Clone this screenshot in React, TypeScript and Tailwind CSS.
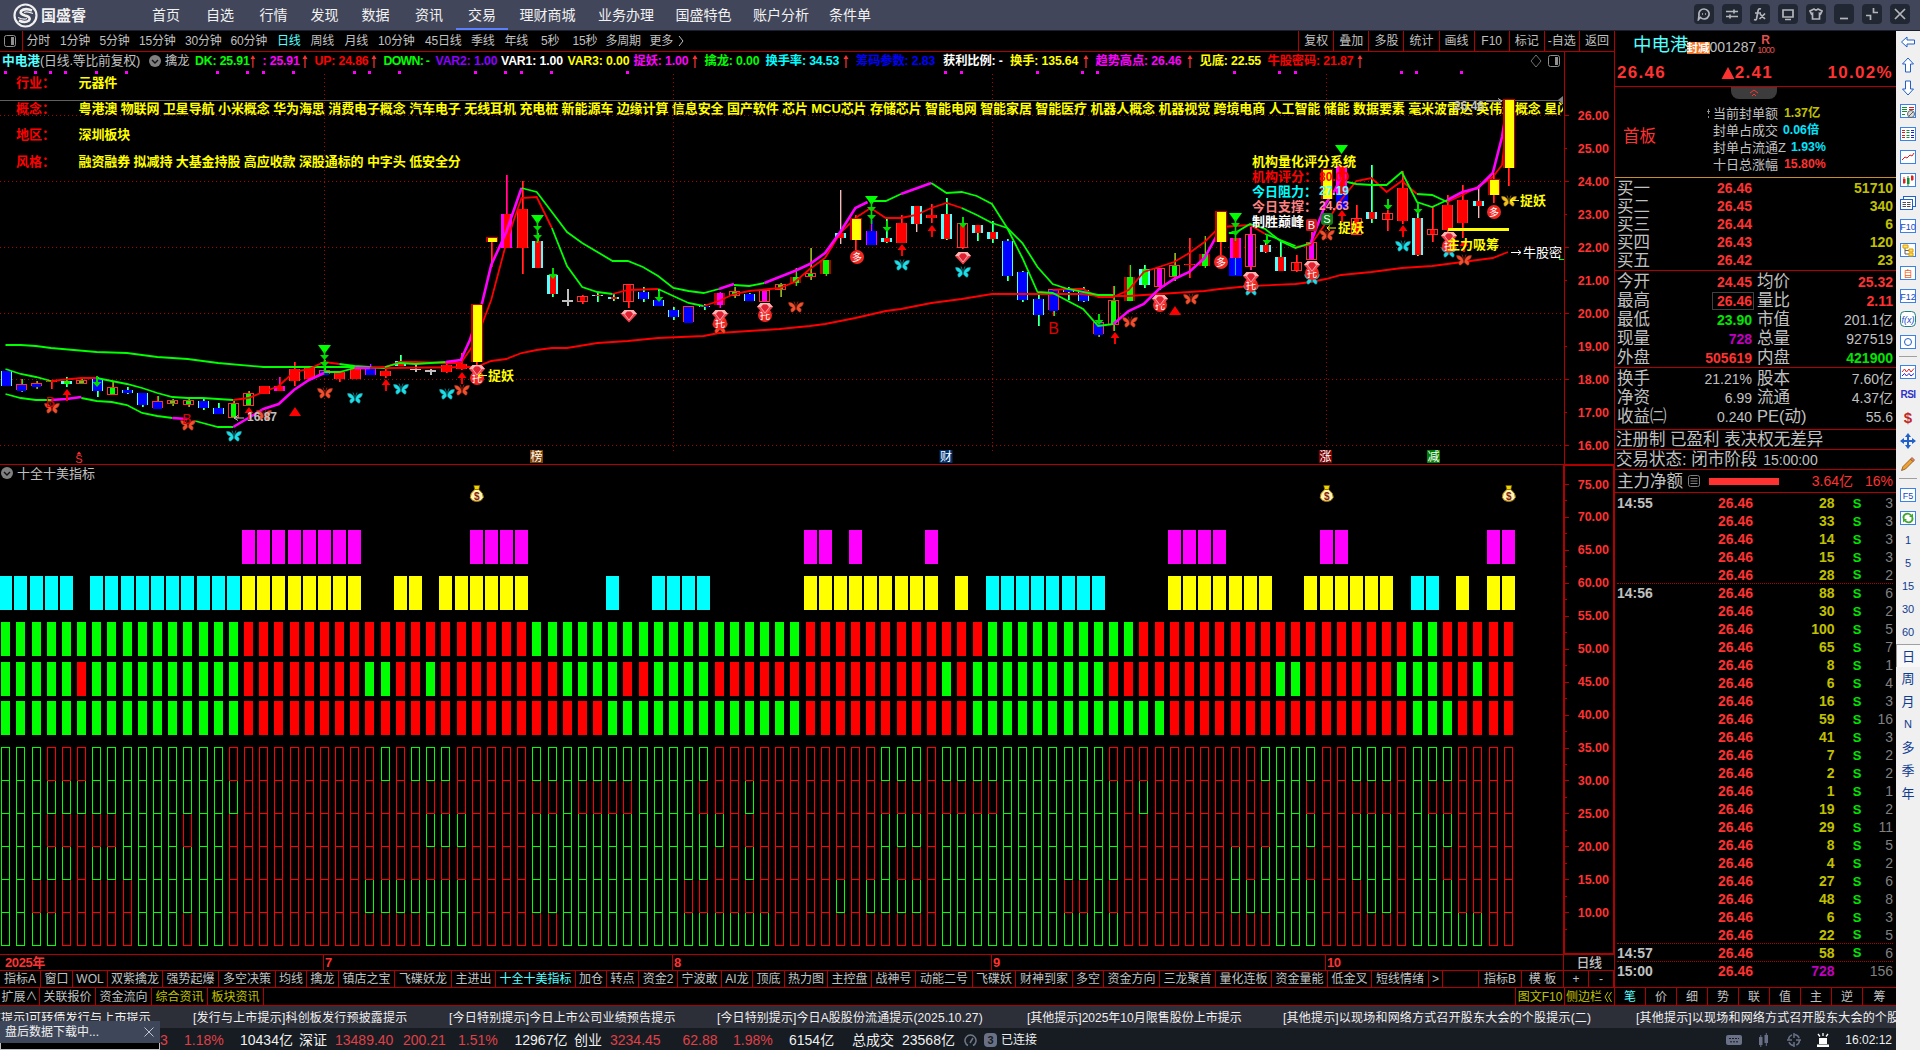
import React from 'react';

const STEP = 15.177;
const cx = (i: number) => 5.5 + i * STEP;

const MENU = [
    ['首页', 'w-[54px]'], ['自选', 'w-[54px]'], ['行情', 'w-[53px]'], ['发现', 'w-[49px]'],
    ['数据', 'w-[53px]'], ['资讯', 'w-[54px]'], ['交易', 'w-[52px]'], ['理财商城', 'w-[79px]'],
    ['业务办理', 'w-[78px]'], ['国盛特色', 'w-[77px]'], ['账户分析', 'w-[78px]'], ['条件单', 'w-[60px]'],
];

const PERIODS = [
    ['分时', 'w-[33.5px]'], ['1分钟', 'w-[39.5px]'], ['5分钟', 'w-[39.5px]'], ['15分钟', 'w-[46px]'],
    ['30分钟', 'w-[45.5px]'], ['60分钟', 'w-[46.5px]'], ['日线', 'w-[33.5px]'], ['周线', 'w-[34px]'],
    ['月线', 'w-[33.5px]'], ['10分钟', 'w-[47px]'], ['45日线', 'w-[46px]'], ['季线', 'w-[33.5px]'],
    ['年线', 'w-[36.5px]'], ['5秒', 'w-[31.5px]'], ['15秒', 'w-[33px]'], ['多周期', 'w-[44px]'], ['更多', 'w-[28px]'],
];

const TOOLS = ['复权', '叠加', '多股', '统计', '画线', 'F10', '标记', '-自选', '返回'];

// label, colour, width, rising arrow
const INDICATORS: [string, string, string, boolean][] = [
    ['擒龙', 'text-[#c0c0c0]', 'w-[30px]', false],
    ['DK: 25.91', 'text-[#00ff00]', 'w-[67.5px]', true],
    [': 25.91', 'text-[#ff00ff]', 'w-[52px]', true],
    ['UP: 24.86', 'text-[#ff0000]', 'w-[69px]', true],
    ['DOWN: -', 'text-[#00ff00]', 'w-[52px]', false],
    ['VAR2: 1.00', 'text-[#8c00ff]', 'w-[65.5px]', false],
    ['VAR1: 1.00', 'text-white', 'w-[66.5px]', false],
    ['VAR3: 0.00', 'text-[#ffff00]', 'w-[66px]', false],
    ['捉妖: 1.00', 'text-[#ff00ff]', 'w-[71px]', true],
    ['擒龙: 0.00', 'text-[#00ff00]', 'w-[61px]', false],
    ['换手率: 34.53', 'text-[#00ffff]', 'w-[90.5px]', true],
    ['筹码参数: 2.83', 'text-[#0000ff]', 'w-[87px]', false],
    ['获利比例: -', 'text-white', 'w-[67px]', false],
    ['换手: 135.64', 'text-[#ffff00]', 'w-[85.5px]', true],
    ['趋势高点: 26.46', 'text-[#ff00ff]', 'w-[104px]', true],
    ['见底: 22.55', 'text-[#ffff00]', 'w-[68px]', false],
    ['牛股密码: 21.87', 'text-[#ff0000]', 'w-[102px]', true],
];

const TABS = [
    ['指标A', 'w-[41px]'], ['窗口', 'w-[32px]'], ['WOL', 'w-[35px]'], ['双紫擒龙', 'w-[55px]'], ['强势起爆', 'w-[56px]'],
    ['多空决策', 'w-[57px]'], ['均线', 'w-[31px]'], ['擒龙', 'w-[32px]'], ['镇店之宝', 'w-[56px]'], ['飞碟妖龙', 'w-[57px]'],
    ['主进出', 'w-[44px]'], ['十全十美指标', 'w-[80px]'], ['加仓', 'w-[31px]'], ['转点', 'w-[32px]'], ['资金2', 'w-[39px]'],
    ['宁波敢', 'w-[44px]'], ['AI龙', 'w-[31px]'], ['顶底', 'w-[32px]'], ['热力图', 'w-[43px]'], ['主控盘', 'w-[44px]'],
    ['战神号', 'w-[44px]'], ['动能二号', 'w-[57px]'], ['飞碟妖', 'w-[43px]'], ['财神到家', 'w-[57px]'], ['多空', 'w-[31px]'],
    ['资金方向', 'w-[56px]'], ['三龙聚首', 'w-[56px]'], ['量化连板', 'w-[56px]'], ['资金量能', 'w-[56px]'], ['低金叉', 'w-[44px]'],
    ['短线情绪', 'w-[57px]'], ['>', 'w-[14px]'], ['', 'w-[36px]'], ['指标B', 'w-[43px]'], ['模 板', 'w-[42px]'],
    ['+', 'w-[25px]'], ['-', 'w-[25px]'],
];

const CONCEPTS = '粤港澳 物联网 卫星导航 小米概念 华为海思 消费电子概念 汽车电子 无线耳机 充电桩 新能源车 边缘计算 信息安全 国产软件 芯片 MCU芯片 存储芯片 智能电网 智能家居 智能医疗 机器人概念 机器视觉 跨境电商 人工智能 储能 数据要素 毫米波雷达 英伟达概念 星闪';

// [wickTop, wickBottom, bodyTop, bodyBottom, kind]
const CANDLES: [number, number, number, number, string][] = [
    [371, 386, 371, 386, 'cb'], [379, 392, 384, 390, 'rb'], [381, 389, 383, 386, 'rb'], [381, 389, 381, 382, 'rr'],
    [377, 387, 381, 384, 'cg'], [379, 384, 380, 383, 'rg'], [377, 397, 379, 391, 'cb'], [382, 394, 387, 394, 'rg'],
    [387, 394, 390, 393, 'cb'], [393, 407, 393, 405, 'cb'], [396, 409, 401, 408, 'rb'], [399, 406, 400, 403, 'rg'],
    [398, 407, 400, 404, 'rg'], [399, 410, 401, 408, 'cb'], [403, 414, 408, 414, 'cb'], [401, 418, 403, 417, 'rg'],
    [391, 406, 393, 405, 'rg'], [386, 394, 386, 394, 'rr'], [377, 391, 386, 391, 'mr'], [362, 386, 369, 381, 'rr'],
    [368, 379, 368, 379, 'rr'], [360, 374, 370, 374, 'rb'], [371, 382, 372, 379, 'rr'], [368, 379, 368, 379, 'rr'],
    [364, 375, 368, 375, 'mb'], [369, 378, 371, 376, 'rr'], [355, 366, 361, 366, 'cr'], [362, 372, 369, 370, 'ww'],
    [369, 375, 370, 372, 'ww'], [363, 373, 365, 372, 'rr'], [353, 370, 364, 369, 'rr'], [304, 367, 304, 362, 'yy'],
    [237, 267, 237, 242, 'yy'], [175, 248, 214, 248, 'mr'], [181, 274, 209, 248, 'rr'], [233, 268, 241, 268, 'cr'],
    [273, 297, 275, 294, 'cr'], [289, 306, 300, 302, 'ww'], [295, 304, 296, 301, 'hr'], [293, 302, 295, 296, 'cr'],
    [293, 301, 297, 299, 'cr'], [284, 308, 284, 301, 'hr'], [287, 302, 292, 299, 'cb'], [290, 306, 300, 306, 'cb'],
    [307, 320, 310, 317, 'cb'], [306, 322, 306, 322, 'rb'], [304, 310, 306, 307, 'cb'], [292, 308, 293, 305, 'dm'],
    [287, 298, 291, 295, 'rg'], [293, 301, 294, 301, 'cb'], [290, 301, 290, 301, 'rm'], [283, 297, 284, 289, 'rg'],
    [268, 286, 277, 283, 'dg'], [248, 280, 273, 276, 'rg'], [260, 276, 260, 274, 'dg'], [190, 244, 233, 238, 'cs'],
    [215, 250, 218, 240, 'yy'], [220, 245, 231, 245, 'mb'], [219, 243, 238, 242, 'cr'], [215, 243, 223, 243, 'rr'],
    [206, 232, 206, 224, 'cs'], [204, 223, 215, 218, 'rr'], [198, 240, 214, 239, 'cr'], [223, 249, 223, 247, 'hr'],
    [225, 241, 225, 233, 'cr'], [221, 243, 232, 239, 'cr'], [239, 281, 241, 276, 'cb'], [271, 302, 272, 300, 'cb'],
    [292, 326, 299, 315, 'cb'], [289, 316, 289, 310, 'rb'], [287, 300, 289, 292, 'cb'], [287, 302, 290, 301, 'cb'],
    [321, 337, 322, 334, 'rb'], [286, 331, 300, 324, 'rg'], [265, 301, 277, 301, 'dg'], [265, 288, 269, 285, 'cg'],
    [268, 290, 268, 286, 'rm'], [253, 281, 265, 276, 'rg'], [238, 278, 264, 265, 'rr'], [236, 268, 254, 266, 'dg'],
    [211, 255, 211, 242, 'yy'], [238, 276, 238, 258, 'mr'], [227, 270, 234, 266, 'rm'], [242, 253, 245, 252, 'cs'],
    [242, 271, 257, 271, 'cr'], [255, 272, 262, 270, 'hr'], [232, 260, 242, 259, 'rm'], [169, 199, 169, 199, 'yy'],
    [166, 209, 166, 194, 'mr'], [205, 235, 218, 234, 'hr'], [165, 223, 212, 219, 'cr'], [210, 231, 213, 219, 'hr'],
    [171, 224, 188, 221, 'rr'], [208, 256, 218, 255, 'cr'], [207, 242, 229, 234, 'hr'], [195, 232, 205, 230, 'rr'],
    [185, 238, 200, 223, 'rr'], [185, 218, 201, 206, 'cs'], [173, 203, 179, 195, 'yy'], [99, 186, 99, 168, 'yy'],
];

const HUE: Record<string, string> = {
    c: '#54ffff', r: '#ff3232', m: '#ff00ff', d: '#b00000', y: '#ffff00', w: '#c0c0c0', b: '#0000ff', g: '#00ff00', h: '#ff3232', s: '#ff0000',
};

const LINES: [string, string][] = [
    ['g', '0,345 1,345 2,346 3,348 6,352 8,353 10,357 12,359 14,363 17,367 23,367 25,368'],
    ['r', '25,368 31,367 32,361 33,359 34,353 35,350 36,348 37,348 39,343 41,341 43,338 46,336 47,333 50,330 51,329 53,326 54,324 56,318 58,311 59,309 61,303 63,299 65,294 71,294 72,296 74,296 76,294 77,293 79,291 80,289 82,286 85,284 86,282 87,279 88,275 90,272 92,268 94,266 96,262 98,258 99,252'],
    ['g', '0,369 1,374 2,377 3,381'],
    ['r', '3,381 5,378 6,378'],
    ['g', '6,378 7,381 8,384 9,388 10,393 11,397 12,398 13,398 14,399 15,400'],
    ['r', '15,400 16,398 17,392 18,386 19,372 20,369 21,362 22,364'],
    ['g', '22,364 23,366 24,367'],
    ['r', '24,368 25,367 26,362 27,362 29,363 30,363 30.6,350 31,340 32,300 33,243 33.5,220 34,198 35,197 36,228'],
    ['g', '36,228 37,266 38,287 39,292 40,294'],
    ['r', '40,294 41,290 43,289'],
    ['g', '43,289 44,296 45,303 46,306'],
    ['r', '46,306 47,301 48,294 49,291 51,288 52,282 53,269 54,258 55,233 56,218 57,208 58,218 59,218 60,215 61,208 62,203 63,208'],
    ['g', '63,208 64,215 65,223 66,228 67,258 68,292 69,293 70,301 71,309 72,326 73,324'],
    ['r', '69,290 70,289 71,289 72,297 73,297 74,290 75,272 77,262 78,253 79,242 80,227 82,225 83,234'],
    ['g', '83,234 85,246'],
    ['r', '85,247 86,245 87,223 88,200 89,181 90,178 91,192 92,181 93,194'],
    ['g', '93,194 94,195 95,202'],
    ['r', '95,202 96,195 97,187 98,177 98.6,165 99,110'],
    ['g', '0,394 1,398 2,400 3,400'],
    ['m', '3,400 4,399 5,397'],
    ['g', '5,398 6,401 7,402 8,405 9,413 10,416 11,418'],
    ['m', '11,418 12,419'],
    ['g', '12.5,421 14,427 15,427'],
    ['m', '15,427 16,418 17,409 18,404 19,390 20,380 21,373'],
    ['g', '21,372 22,372 23,368'],
    ['m', '23,368 24,368'],
    ['g', '25,367 26,363 27,364 29,362'],
    ['m', '29,362 30,360 30.6,340 31.4,303 32,265 33,232 34,188'],
    ['g', '34,188 35,192 36,212 37,232 38,243 40,261 41,261 42,267 43,276 44,288 45,291 46,293 47,289'],
    ['m', '47,289 48,284'],
    ['g', '48,285 49,286 50,283'],
    ['m', '50,283 51,277 52,271 53,264 54,253 55,232 56,208 56.8,202'],
    ['g', '57,201 58,201 59,194'],
    ['m', '59,194 61,183'],
    ['g', '61,183 62,193 63,192 64,196 65,204 66,228 67,243 68,267 69,284 70,289 72,295 73,295'],
    ['m', '73,324 74,311 75,304 76,289 77,279 78,272 79,258 79.9,233'],
    ['g', '80.6,233 81,233 82,224 83,229 84,241 85,248 86,243'],
    ['m', '86,243 87,203 87.6,190 88,177'],
    ['g', '88.4,182 89,184 90,185 91,185 92,172 93,202 94,207 95,200'],
    ['m', '95,200 96,192 97,188 98,173 98.6,137 99,100'],
];

const DOTS = [0, 2, 3, 4, 6, 8, 14, 16, 17, 19, 23, 24, 26, 31, 33, 34, 36, 41, 62, 63, 68, 71, 72, 81, 84, 85, 92, 93, 96];
const MONTHS = [324.5, 673.5, 992.5, 1326.5];
const PRICES = [26, 25, 24, 23, 22, 21, 20, 19, 18, 17, 16];

const RED_FLIES = [[52, 408], [188, 425], [264, 415], [325, 393], [462, 390], [720, 328], [796, 307], [1130, 322], [1191, 299], [1327, 235], [1464, 260]];
const CYAN_FLIES = [[234, 436], [355, 398], [401, 389], [447, 394], [902, 265], [963, 272], [1251, 290], [1312, 279], [1403, 246], [1449, 252]];
const BALLS: [number, number, string][] = [
    [477, 378, '托'], [720, 323, '托'], [765, 315, '托'], [1160, 305, '托'], [1251, 285, '托'], [1312, 273, '托'], [1449, 246, '托'],
    [857, 257, '多'], [1221, 262, '多'], [1494, 212, '多'],
];
const GEMS = [[477, 371], [629, 316], [720, 316], [765, 309], [963, 258], [1160, 301], [1251, 278], [1312, 267], [1449, 238]];
const UPS = [[67, 389], [249, 407], [386, 379], [462, 372], [902, 244], [932, 225], [1115, 332], [1342, 210], [1403, 225], [1464, 240]];
const DOWNS = [[97, 385], [553, 277], [659, 300], [887, 230], [963, 226], [1099, 323], [1267, 243], [1388, 208], [1418, 212]];
const TRIPLES = [[324.5, 345, 357, 364], [537.5, 215, 228, 237], [871.5, 196, 209, 217], [1235.5, 213, 225, 233]];

// run-length colour rows of the lower panel
const unroll = (s: string) => s.split(' ').map((t) => t[0].repeat(Number(t.slice(1)))).join('');
const BLOCKS: [number, number, string][] = [
    [530, 13, 'x16 m8 x7 m4 x18 m2 x1 m1 x4 m1 x15 m4 x6 m2 x9 m2'],
    [576, 13, 'a5 x1 a10 y8 x2 y2 x1 y6 x5 a1 x2 a4 x6 y9 x1 y1 x1 a8 x4 y7 x2 y6 x1 a2 x1 y1 x1 y2'],
    [622, 9, 'g16 e19 g18 e12 g10 e18 g2 e5'],
    [662, 9, 'g5 e1 g10 e8 g2 e2 g1 e8 g4 e2 g4 e15 g1 e1 g9 e11 g2 e6 g3 e2 g1 e2'],
    [701, 9, 'g16 e24 g13 e11 g13 e16 g3 e4'],
];
const FRAMES: [number, string][] = [
    [912, 'g4 e5 g3 e1 g2 e13 g3 e6 g14 e11 g12 e10 g3 e6 g5 e2'],
    [879, 'g2 e7 g6 e9 g7 e4 g10 e10 g1 e1 g4 e1 g8 e2 g1 e8 g6 e3 g2 e1 g3 e4'],
    [846, 'g5 e1 g9 e20 g12 e2 g1 e8 g1 e3 g12 e7 g1 e1 g3 e3 g3 e1 g2 e5'],
    [813, 'g3 e5 g4 e1 g2 e13 g3 e4 g13 e10 g3 e1 g12 e10 g3 e2 g3 e1 g3 e4'],
    [780, 'g16 e21 g1 e4 g4 e3 g1 e16 g8 e1 g1 e8 g2 e7 g1 e6'],
    [747, 'g3 e3 g9 e10 g1 e1 g3 e5 g12 e11 g3 e1 g11 e10 g4 e2 g3 e1 g3 e4'],
];
const BLOCK_HUE: Record<string, string> = { m: '#ff00ff', a: '#00ffff', y: '#ffff00', g: '#00ff00', e: '#ff0000' };

const TICKS = [
    ['14:55', '28', '3'], ['', '33', '3'], ['', '14', '3'], ['', '15', '3'], ['', '28', '2'],
    ['14:56', '88', '6'], ['', '30', '2'], ['', '100', '5'], ['', '65', '7'], ['', '8', '1'],
    ['', '6', '4'], ['', '16', '3'], ['', '59', '16'], ['', '41', '3'], ['', '7', '2'],
    ['', '2', '2'], ['', '1', '1'], ['', '19', '2'], ['', '29', '11'], ['', '8', '5'],
    ['', '4', '2'], ['', '27', '6'], ['', '48', '8'], ['', '6', '3'], ['', '22', '5'],
    ['14:57', '58', '6'], ['15:00', '728', '156'],
];

function Candle({ i, c }: { i: number; c: [number, number, number, number, string] }) {
    const [wt, wb, bt, bb, kind] = c;
    const x = Math.round(cx(i) - 5);
    const h = Math.max(bb - bt, 1);
    const edge = HUE[kind[0]];
    const fill = kind[1] === 'r' ? '#ff0000' : HUE[kind[1]];
    const wick = kind[0] === 'y' ? '#ff3232' : edge;
    const side = ['cb', 'rb', 'cr'].includes(kind) ? '#00ff00' : kind === 'yy' ? '#ff0000' : fill;
    return (
        <g>
            <rect x={x + 5} y={wt} width={1} height={wb - wt} fill={wick} />
            <rect x={x + 6} y={wt} width={1} height={wb - wt} fill={side} />
            {kind === 'yy' && <><rect x={x} y={bt} width={12} height={h} fill="#c00000" /><rect x={x + 1.5} y={bt + 1} width={9} height={h - 1} fill="#ffff00" /></>}
            {['cb', 'rb', 'mb', 'rr', 'ww'].includes(kind) && <><rect x={x} y={bt} width={11} height={h} fill={edge} /><rect x={x + 1} y={bt + (kind === 'rb' ? 1 : 0)} width={9} height={h} fill={fill} /></>}
            {['cr', 'cs', 'cg', 'mr', 'dg', 'dm'].includes(kind) && <><rect x={x} y={bt} width={11} height={h} fill={edge} /><rect x={x + 3} y={bt} width={6} height={h} fill={fill} /></>}
            {['rg', 'hr', 'rm'].includes(kind) && <><rect x={x + 0.5} y={bt + 0.5} width={10} height={h} fill="#000" stroke="#ff3232" /><rect x={x + 3} y={bt + 1} width={5} height={h - 1} fill={fill} /></>}
        </g>
    );
}

function Butterfly({ x, y, body, rim }: { x: number; y: number; body: string; rim: string }) {
    return (
        <g transform={`translate(${x} ${y})`} fill={body} stroke={rim} strokeWidth={0.5}>
            <path d="M-.4 1 L-1.5-2 Q-4.500-5.500-7.500-4.500 Q-7.500-1-3.500.5 Q-6 1.500-5 4.500 Q-3.500 7-.4 2Z" />
            <path d="M.4 1 L1.500-2 Q4.500-5.500 7.500-4.500 Q7.500-1 3.500.5 Q6 1.500 5 4.500 Q3.500 7 .4 2Z" />
            <path d="M-.5-1.500 L-2-5.500 M.5-1.500 L2-5.500 M0-1.500 V3" fill="none" strokeWidth={0.9} />
        </g>
    );
}

function Tag({ x, label, fill }: { x: number; label: string; fill: string }) {
    return (
        <g>
            <rect x={x - 6.5} y={450} width={13} height={13} fill={fill} />
            <text x={x} y={461} textAnchor="middle" fill="#fff" className="text-[12px]">{label}</text>
        </g>
    );
}

function PriceChart() {
    return (
        <svg width={1614} height={394} viewBox="0 70 1614 394" className="block overflow-visible">
            <g shapeRendering="crispEdges" stroke="#b00000" strokeWidth={1}>
                {[26, 24, 22, 20, 18, 16].map((p) => (
                    <line key={p} x1={0} x2={1564} y1={115.5 + (26 - p) * 33} y2={115.5 + (26 - p) * 33} strokeDasharray="1 3" />
                ))}
                {MONTHS.map((x) => <line key={x} x1={x} x2={x} y1={74} y2={451} strokeDasharray="1 3" />)}
                <line x1={1564.5} x2={1564.5} y1={52} y2={464} />
                {PRICES.map((p) => (
                    <line key={p} x1={1564} x2={p % 2 ? 1567 : 1569} y1={115.5 + (26 - p) * 33} y2={115.5 + (26 - p) * 33} />
                ))}
            </g>
            {PRICES.map((p) => (
                <text key={p} x={1609} y={119.8 + (26 - p) * 33} textAnchor="end" fill="#ff3232" className="text-[12.5px] font-bold">{p}.00</text>
            ))}
            {DOTS.map((i) => <rect key={i} x={Math.round(cx(i) - 2)} y={71} width={3} height={3} fill="#ff00ff" />)}
            <line x1={0} x2={1563} y1={100.5} y2={100.5} stroke="#606060" />
            <path d="M1563 96 V104 L1558 100Z" fill="#808080" />

            <g shapeRendering="crispEdges">
                {CANDLES.map((c, i) => <Candle key={i} i={i} c={c} />)}
                <rect x={1229} y={258} width={13} height={18} fill="#0000ff" />
                <rect x={1235} y={258} width={1} height={17} fill="#00c0ff" />
                <rect x={1336} y={194} width={12} height={15} fill="#0000ff" />
            </g>

            {LINES.map(([c, pts], k) => (
                <polyline
                    key={k}
                    points={pts.split(' ').map((p) => { const [i, y] = p.split(','); return `${cx(Number(i)).toFixed(1)},${y}`; }).join(' ')}
                    fill="none"
                    stroke={c === 'r' ? '#ff0000' : HUE[c]}
                    strokeWidth={c === 'm' ? 2.6 : 1.8}
                />
            ))}
            <g shapeRendering="crispEdges">
                {[31, 56, 80, 87, 98, 99].map((i) => <Candle key={i} i={i} c={CANDLES[i]} />)}
            </g>
            <rect x={1448} y={228} width={61} height={3} fill="#ffff00" />
            <rect x={1559} y={259} width={5} height={1} fill="#00ff00" />

            {CYAN_FLIES.map(([x, y], k) => <Butterfly key={k} x={x} y={y} body="#20dce6" rim="#0a8088" />)}
            {RED_FLIES.map(([x, y], k) => <Butterfly key={k} x={x} y={y} body="#f0502e" rim="#8c2414" />)}
            <Butterfly x={1509} y={201} body="#f0c020" rim="#806010" />
            {BALLS.map(([x, y, s], k) => (
                <g key={k}>
                    <circle cx={x} cy={y} r={7} fill="#f02824" />
                    <text x={x} y={y + 4} textAnchor="middle" fill="#fff" className="text-[10px]">{s}</text>
                </g>
            ))}
            {GEMS.map(([x, y], k) => (
                <g key={k} transform={`translate(${x} ${y})`}>
                    <path d="M-4.500-6 H4.500 L8-2 L0 6.500 L-8-2Z" fill="#f4434c" />
                    <path d="M-4.500-6 H4.500 L8-2 H-8Z" fill="#ffb4b4" />
                    <path d="M-4.500-2 L-2-5 H2 L4.500-2 L0 4Z" fill="#e02030" stroke="#ffd0d0" strokeWidth={0.7} />
                </g>
            ))}
            {UPS.map(([x, y], k) => <path key={k} d={`M${x} ${y} l4.500 6 h-3.500 v6 h-2 v-6 h-3.500Z`} fill="#ff0000" />)}
            {DOWNS.map(([x, y], k) => <path key={k} d={`M${x} ${y + 2} l4.500-5 h-3.500 v-6 h-2 v6 h-3.500Z`} fill="#00dc00" />)}
            <path d="M295 407 L301 416 H289Z M1175 306 L1181 315 H1169Z" fill="#ff0000" />
            {TRIPLES.map(([x, a, b, c]) => (
                <g key={x}>
                    <path d={`M${x - 6.5} ${a} h13 l-6.500 9Z`} fill="#00ff00" />
                    <path d={`M${x - 4.5} ${b - 2} h9 l-4.500 5Z M${x - 4.5} ${c - 2} h9 l-4.500 5Z M${x - 0.8} ${a + 6} h1.600 v22 h-1.600Z`} fill="#00dc00" />
                </g>
            ))}
            <path d="M1335 145 h13 l-6.500 9Z" fill="#00ff00" />

            <g className="text-[14px]" fill="#e00000" textAnchor="middle">
                <text x={50.5} y={407}>B</text>
                <text x={187} y={424}>B</text>
                <text x={1053.5} y={334} className="text-[16px]">B</text>
            </g>
            <text x={79} y={463} textAnchor="middle" fill="#ff3232" className="text-[11px]">S</text>
            <path d="M79 451.500 l2.500 3 h-5Z" fill="#ff3232" />
            <rect x={1306} y={219} width={11} height={12} rx={1.5} fill="#c81818" />
            <rect x={1321} y={213} width={12} height={12} rx={3} fill="#10801c" />
            <g className="text-[11px]" fill="#fff" textAnchor="middle">
                <text x={1311.5} y={229}>B</text>
                <text x={1327} y={223}>S</text>
            </g>

            <path d="M234 418 H244 M234 418 l4-2.500 M234 418 l4 2.500" stroke="#c0c0c0" fill="none" />
            <text x={247} y={421} fill="#c0c0c0" className="text-[12px] font-bold">16.87</text>
            <text x={1454} y={110} fill="#c0c0c0" className="text-[12px] font-bold">26.46</text>
            <path d="M1486 101 H1502 M1502 101 l-4-2.500 M1502 101 l-4 2.500" stroke="#c0c0c0" fill="none" />
            <g className="text-[13px] font-bold" fill="#ffff00">
                <path d="M478 375.500 H487 M478 375.500 l3-2.500 M478 375.500 l3 2.500 M1327 228 H1336 M1327 228 l3-2.500 M1327 228 l3 2.500 M1510 200.500 H1519 M1510 200.500 l3-2.500 M1510 200.500 l3 2.500" stroke="#ffff00" fill="none" />
                <text x={488} y={380}>捉妖</text>
                <text x={1338} y={232}>捉妖</text>
                <text x={1520} y={205}>捉妖</text>
                <text x={1447} y={249}>主力吸筹</text>
                <text x={1252} y={166}>机构量化评分系统</text>
                <text x={1252} y={181} fill="#ff0000">机构评分：</text>
                <text x={1319} y={181} fill="#ff0000" className="text-[12px]">80.00</text>
                <text x={1252} y={196} fill="#00ffff">今日阻力：</text>
                <text x={1319} y={195} fill="#54ffff" className="text-[12px]">27.19</text>
                <text x={1252} y={211} fill="#ff8080">今日支撑：</text>
                <text x={1319} y={210} fill="#ff9090" className="text-[12px]">24.63</text>
                <text x={1252} y={226} fill="#ffffff">制胜巅峰</text>
                <text x={1523} y={257} fill="#ffffff" className="font-normal">牛股密</text>
            </g>
            <path d="M1511 252.500 H1521 M1521 252.500 l-3-2.500 M1521 252.500 l-3 2.500" stroke="#fff" fill="none" />
            <Tag x={536.5} label="榜" fill="#804000" />
            <Tag x={946} label="财" fill="#003070" />
            <Tag x={1325.5} label="涨" fill="#800000" />
            <Tag x={1433.5} label="减" fill="#008000" />
        </svg>
    );
}

function BlockChart() {
    return (
        <svg width={1614} height={475} viewBox="0 479 1614 475" className="block overflow-visible" shapeRendering="crispEdges">
            {BLOCKS.map(([y, w, runs]) => unroll(runs).split('').map((k, i) => (
                k === 'x' ? null : <rect key={`${y}-${i}`} x={Math.round(cx(i) - (w === 13 ? 6.3 : 4.3))} y={y} width={w} height={34} fill={BLOCK_HUE[k]} />
            )))}
            {FRAMES.map(([y, runs]) => unroll(runs).split('').map((k, i) => (
                <rect key={`${y}-${i}`} x={Math.round(cx(i) - 4.3) + 0.5} y={y + 0.5} width={8} height={33} fill="none" stroke={BLOCK_HUE[k]} />
            )))}
            {[31, 87, 99].map((i) => (
                <g key={i} transform={`translate(${cx(i) + 0.8} 493.500)`} shapeRendering="auto">
                    <path d="M-3-8 H3 L2-4 H-2Z" fill="#e8d800" stroke="#805000" strokeWidth={0.6} />
                    <path d="M-2-4 H2 Q7 0 6.500 4 Q5 8 0 8 Q-5 8-6.500 4 Q-7 0-2-4Z" fill="#fff4b0" stroke="#a07800" />
                    <text x={0} y={6} textAnchor="middle" fill="#802010" className="text-[10px] font-bold">$</text>
                </g>
            ))}
            <rect x={1564} y={465} width={50} height={489} fill="none" stroke="#b00000" strokeWidth={2} />
            {Array.from({ length: 28 }, (_, k) => (
                <rect key={k} x={1565} y={484 + Math.round(k * 16.47)} width={k % 2 ? 2 : 4} height={1} fill="#b00000" />
            ))}
            {Array.from({ length: 14 }, (_, k) => (
                <text key={k} x={1609} y={488.5 + k * 32.93} textAnchor="end" fill="#ff3232" className="text-[12.5px] font-bold">{75 - k * 5}.00</text>
            ))}
        </svg>
    );
}

function ChevronDot() {
    return (
        <svg width="12" height="12" viewBox="0 0 12 12" className="shrink-0">
            <circle cx="6" cy="6" r="6" fill="#808080" />
            <path d="M3 5 L6 8 L9 5" fill="none" stroke="#111" strokeWidth="1.400" />
        </svg>
    );
}

function Header() {
    const icons = [
        <><path d="M7 2 a5 5 0 1 1-3.500 8.500 L1.500 12.500 L2 8 A5 5 0 0 1 7 2Z" /><path d="M5 7h1M8 7h1" /></>,
        <path d="M1 4.500H13M1 9.500H13M9 2.500V6.500M5 7.500V11.500" />,
        <path d="M8 2 Q5.500 1 5 4 L3.500 12 Q3 13.500 1 12.500 M2 6 H8 M7 7 L12 12 M12 6.500 L6.500 12" />,
        <path d="M2 3H12V10H2ZM4 12.500H10" />,
        <path d="M5 2 Q7 4 9 2 L13 4 L11.500 7 L10.500 6.500 V12 H3.500 V6.500 L2.500 7 L1 4Z" />,
        <path d="M3 11.500H11" />,
        <path d="M8.500 1V5.500H13M1 8.500H5.500V13" />,
        <path d="M2 2L12 12M12 2L2 12" />,
    ];
    return (
        <header className="flex h-[31px] shrink-0 border-b border-[#1b2030] bg-[#41465a]">
            <div className="flex w-[139px] items-center pl-[13px]">
                <svg width="25" height="25" viewBox="0 0 25 25" fill="none" stroke="#f0f0f0">
                    <circle cx="12.500" cy="12.500" r="11" strokeWidth="2.200" />
                    <path d="M19 7.500 Q12 4.500 8 8 Q6.500 11 12 12.500 Q18.500 14 16 17.500 Q12 20.500 6 17.500" strokeWidth="2.600" />
                    <path d="M20 10.500 Q14 8 11 9.500 M5 14.500 Q11 17 14 15.500" strokeWidth="1.200" />
                </svg>
                <span className="ml-[3px] text-[15px] font-bold text-[#f0f0f0]">国盛睿</span>
            </div>
            <nav className="flex text-[14px] text-[#f2f2f2]">
                {MENU.map(([label, w]) => (
                    <div key={label} className={`${w} flex items-center justify-center whitespace-nowrap border-b-2 pt-px ${label === '交易' ? 'border-[#5a80ff]' : 'border-transparent'}`}>{label}</div>
                ))}
            </nav>
            <div className="ml-auto flex gap-[8px] pr-[10px] pt-[4px]">
                {icons.map((ic, k) => (
                    <div key={k} className="flex h-[20px] w-[20px] items-center justify-center rounded bg-[#212733]">
                        <svg width="14" height="14" viewBox="0 0 14 14" fill="none" stroke="#b4b6bc" strokeWidth="1.700">{ic}</svg>
                    </div>
                ))}
            </div>
        </header>
    );
}

function PanelIcon() {
    return (
        <svg width="12" height="12" viewBox="0 0 12 12" className="shrink-0"><rect x=".5" y=".5" width="11" height="11" rx="2" fill="none" stroke="#909090" /><rect x="7" y="2" width="3" height="8" fill="#909090" /></svg>
    );
}

function Toolbar() {
    return (
        <div className="flex h-[21px] items-stretch border-b border-[#b00000] text-[12px] text-[#c0c0c0]">
            <div className="flex w-[23px] items-center justify-center border-r border-[#b00000] pr-[3px]"><PanelIcon /></div>
            <div className="flex items-center pl-[3.5px] tracking-[-0.2px]">
                {PERIODS.map(([label, w]) => (
                    <span key={label} className={`${w} whitespace-nowrap ${label === '日线' ? 'text-[#54ffff]' : ''}`}>{label}</span>
                ))}
                <svg width="6" height="12" viewBox="0 0 6 12" fill="none" stroke="#c0c0c0"><path d="M1 1L5 6L1 11" /></svg>
            </div>
            <div className="ml-auto flex">
                {TOOLS.map((t) => (
                    <span key={t} className="flex w-[35.1px] items-center justify-center whitespace-nowrap border-l border-[#b00000]">{t}</span>
                ))}
            </div>
        </div>
    );
}

function IndicatorRow() {
    return (
        <div className="flex h-[18px] items-center whitespace-nowrap text-[12.3px] font-bold tracking-[-0.15px]">
            <span className="w-[38px] pl-[2px] text-[12.8px] text-[#54ffff]">中电港</span>
            <span className="w-[111px] pl-[2px] text-[12.8px] font-normal text-[#c0c0c0]">(日线.等比前复权)</span>
            <ChevronDot />
            <span className="w-[4px]" />
            {INDICATORS.map(([label, color, w, up], k) => (
                <span key={k} className={`${w} ${color} flex shrink-0 items-center ${k === 0 ? 'font-normal' : ''} ${label.startsWith('DOWN') ? 'tracking-[-0.7px]' : ''} ${up ? 'justify-between pr-[7px]' : ''}`}>
                    {label}
                    {up && <svg width="6" height="13" viewBox="0 0 6 13"><path d="M3 0L5.500 4H3.600V13H2.400V4H.5Z" fill="#ff3232" /></svg>}
                </span>
            ))}
            <svg width="12" height="14" viewBox="0 0 12 14" className="ml-[160px] shrink-0" fill="none" stroke="#707070"><path d="M6 1L11 7L6 13L1 7Z" /></svg>
            <span className="w-[6px]" />
            <PanelIcon />
        </div>
    );
}

function Notes() {
    const rows = [['行业：', '元器件', 'h-[26px]'], ['概念：', CONCEPTS, 'h-[26px]'], ['地区：', '深圳板块', 'h-[27px]'], ['风格：', '融资融券 拟减持 大基金持股 高应收款 深股通标的 中字头 低安全分', 'h-[27px]']];
    return (
        <div className="absolute -top-px left-0 w-[1563px] overflow-hidden text-[13px] font-bold">
            {rows.map(([k, v, h]) => (
                <div key={k} className={`${h} flex items-center whitespace-nowrap pl-[16px]`}>
                    <span className="w-[62.5px] shrink-0 text-[#ff0000]">{k}</span>
                    <span className="text-[#ffff00] tracking-[-0.1px]">{v}</span>
                </div>
            ))}
        </div>
    );
}

function BottomBars() {
    const months = [['2025年', 'w-[318px]'], ['7', 'w-[349px]'], ['8', 'w-[319px]'], ['9', 'w-[334px]'], ['10', 'w-[238px]']];
    const cell = 'flex w-[56px] items-center justify-center border-r border-[#b00000]';
    return (
        <>
            <div className="flex h-[16px] items-stretch border-b border-[#b00000] pl-[5px] text-[13px] font-bold tracking-[-0.4px] text-[#ff3232]">
                {months.map(([m, w], k) => (
                    <span key={m} className={`${w} flex shrink-0 items-center ${k ? 'border-l border-[#b00000] pl-px' : ''}`}>{m}</span>
                ))}
                <span className="flex flex-1 items-center justify-center border-l border-[#b00000] font-medium text-[#c0c0c0]">日线</span>
            </div>
            <div className="flex h-[17px] items-stretch border-b border-[#b00000] text-[12px] text-[#c0c0c0]">
                {TABS.map(([t, w], k) => (
                    <span key={k} className={`${w} flex shrink-0 items-center justify-center whitespace-nowrap border-r border-[#b00000] ${t === '十全十美指标' ? 'text-[#54ffff]' : ''}`}>{t}</span>
                ))}
            </div>
            <div className="flex h-[18px] items-stretch border-b border-[#b00000] text-[12px] text-[#c0c0c0]">
                <span className="flex w-[40px] items-center justify-center border-r border-[#b00000]">扩展∧</span>
                <span className={cell}>关联报价</span>
                <span className={cell}>资金流向</span>
                <span className={`${cell} text-[#c0c000]`}>综合资讯</span>
                <span className={`${cell} text-[#c0c000]`}>板块资讯</span>
                <span className="ml-auto flex w-[49px] items-center justify-center border-l border-[#b00000] text-[#c0c000]">图文F10</span>
                <span className="flex w-[50px] items-center overflow-hidden whitespace-nowrap border-l border-[#b00000] pl-px text-[#c0c000]">侧边栏
                    <svg width="8" height="10" viewBox="0 0 8 10" className="ml-[2px] shrink-0" fill="none" stroke="#c0c000"><path d="M4 0L1 5L4 10M7.500 0L4.500 5L7.500 10" /></svg>
                </span>
            </div>
        </>
    );
}

const RED = 'text-[#ff3232]';
const GREEN = 'text-[#00e600]';
const OLIVE = 'text-[#c0c000]';

function QuotePair({ row }: { row: string[] }) {
    const [a, av, ac, b, bv, bc] = row;
    return (
        <div className="flex h-[19px] items-center">
            <span className="w-[68px]">{a}</span>
            <span className={`text-right text-[14px] ${ac} ${ac ? 'font-bold' : ''} ${a === '最高' ? 'ml-[29px] w-[38px] outline outline-1 outline-offset-1 outline-[#404040]' : 'w-[67px]'}`}>{av}</span>
            <span className="w-[60px] pl-[5px]">{b}</span>
            <span className={`ml-auto text-[14px] ${bc} ${bc ? 'font-bold' : ''}`}>{bv}</span>
        </div>
    );
}

function QuotePanel() {
    const bids = [['买一', '26.46', '51710'], ['买二', '26.45', '340'], ['买三', '26.44', '6'], ['买四', '26.43', '120'], ['买五', '26.42', '23']];
    const seal = [['当前封单额', '1.37亿', OLIVE, 'ml-[6px]'], ['封单占成交', '0.06倍', 'text-[#00e5ff]', 'ml-[5px]'], ['封单占流通Z', '1.93%', 'text-[#00e5ff]', 'ml-[5px]'], ['十日总涨幅', '15.80%', RED, 'ml-[6px]']];
    const main = [
        ['今开', '24.45', RED, '均价', '25.32', RED],
        ['最高', '26.46', RED, '量比', '2.11', RED],
        ['最低', '23.90', GREEN, '市值', '201.1亿', ''],
        ['现量', '728', 'text-[#c000c0]', '总量', '927519', ''],
        ['外盘', '505619', RED, '内盘', '421900', GREEN],
    ];
    const more = [
        ['换手', '21.21%', '', '股本', '7.60亿', ''],
        ['净资', '6.99', '', '流通', '4.37亿', ''],
        ['收益㈡', '0.240', '', 'PE(动)', '55.6', ''],
    ];
    return (
        <section className="flex w-[282px] shrink-0 flex-col border-l border-[#b00000] text-[16.5px] text-[#c0c0c0]">
            <div className="flex h-[28px] items-center pl-[18px]">
                <span className="text-[18.5px] text-[#54ffff]">中电港</span>
                <span className="relative top-[3px] -ml-[2px] w-[23px] bg-[#f07020] text-[11.5px] font-bold leading-[12px] text-white">封减</span>
                <span className="relative top-[1.5px] text-[14px]">001287</span>
                <span className="flex flex-col items-center pl-px leading-[10px] text-[#e05050]">
                    <b className="text-[12px]">R</b><span className="text-[9px] leading-[10px] tracking-[-0.8px]">1000</span>
                </span>
            </div>
            <div className="flex h-[28px] items-center justify-between border-b border-[#b00000] pl-[2px] pr-[3px] text-[17px] font-bold tracking-[1.3px] text-[#ff3232]">
                <span>26.46</span>
                <span className="flex items-center">
                    <svg width="14" height="12" viewBox="0 0 14 13"><path d="M7 0L14 13H0Z" fill="#ff3232" /></svg>2.41
                </span>
                <span>10.02%</span>
            </div>
            <div className="flex h-[91px] flex-col border-b border-[#c89020]">
                <div className="ml-[116px] flex h-[12px] w-[46px] shrink-0 items-center justify-center rounded-b-lg bg-[#3c3c3c]">
                    <svg width="10" height="8" viewBox="0 0 10 8" fill="none" stroke="#ff3232"><path d="M1 4L5 1L9 4M3 7L5 5L7 7" /></svg>
                </div>
                <div className="flex flex-1 items-start">
                    <span className="w-[85px] pl-[8px] pt-[29px] text-[#ff3232]">首板</span>
                    <div className="flex flex-col pt-[6px]">
                        {seal.map(([k, v, c, m], i) => (
                            <div key={k} className="flex h-[17px] items-center text-[13px]">
                                <svg width="13" height="10" viewBox="0 0 13 10">{i === 0 && <path d="M8.500 0V5M8.500 7V9M7 2.500H10" stroke="#909090" />}</svg>
                                <span>{k}</span>
                                <b className={`${c} ${m} text-[12.3px]`}>{v}</b>
                            </div>
                        ))}
                    </div>
                </div>
            </div>
            <div className="flex h-[93px] flex-col border-b border-[#b00000] pl-[2px] pr-[3px] pt-px">
                {bids.map(([k, p, v]) => (
                    <div key={k} className="flex h-[18px] items-center">
                        <span className="w-[68px]">{k}</span>
                        <span className="w-[67px] text-right text-[14px] font-bold text-[#ff3232]">{p}</span>
                        <span className="ml-auto text-[14px] font-bold text-[#c0c000]">{v}</span>
                    </div>
                ))}
            </div>
            <div className="flex h-[97px] flex-col border-b border-[#b00000] pl-[2px] pr-[3px] pt-px">{main.map((r) => <QuotePair key={r[0]} row={r} />)}</div>
            <div className="flex h-[62px] flex-col border-b border-[#b00000] pl-[2px] pr-[3px] pt-px">{more.map((r) => <QuotePair key={r[0]} row={r} />)}</div>
            <div className="flex h-[20px] items-center border-b border-[#b00000] pl-px">注册制 已盈利 表决权无差异</div>
            <div className="flex h-[20px] items-center border-b border-[#b00000] pl-px">交易状态: 闭市阶段<span className="ml-[6px] text-[14px]">15:00:00</span></div>
            <div className="flex h-[23px] items-center border-b border-[#b00000] pl-[2px] pr-[3px]">
                <span>主力净额</span>
                <svg width="12" height="12" viewBox="0 0 12 12" className="ml-[5px]"><rect x=".5" y=".5" width="11" height="11" rx="2" fill="none" stroke="#808080" /><path d="M2.500 3.500H9.500M2.500 6H9.500M2.500 8.500H9.500" stroke="#808080" /></svg>
                <div className="ml-[9px] h-[7px] w-[70px] bg-[#ff3232]" />
                <span className="ml-auto text-[14px] text-[#ff3232]">3.64亿</span>
                <span className="ml-[12px] text-[14px] text-[#ff3232]">16%</span>
            </div>
            <div className="flex h-[494px] flex-col pl-[2px] pr-[3px] pt-px text-[14px] font-bold">
                {TICKS.map(([t, v, n], i) => (
                    <div key={i} className={`flex h-[18px] items-center ${i === 4 || i === 24 || i === 25 ? 'border-b border-dotted border-[#b00000]' : ''}`}>
                        <span className="w-[68px]">{t}</span>
                        <span className="w-[68px] text-right text-[#ff3232]">26.46</span>
                        <span className={`w-[81.5px] text-right ${v === '728' ? 'text-[#c000c0]' : 'text-[#c0c000]'}`}>{v}</span>
                        <span className="w-[27px] text-right text-[13px] text-[#00e600]">{v === '728' ? '' : 'S'}</span>
                        <span className="ml-auto font-normal text-[#808080]">{n}</span>
                    </div>
                ))}
            </div>
            <div className="flex h-[19px] items-stretch border-y border-[#b00000] text-[12px]">
                {['笔', '价', '细', '势', '联', '值', '主', '逆', '筹'].map((t, i) => (
                    <span key={t} className={`flex items-center justify-center ${i === 8 ? 'flex-1' : 'w-[31px] border-r border-[#b00000]'} ${i === 0 ? 'text-[#54ffff]' : ''}`}>{t}</span>
                ))}
            </div>
        </section>
    );
}

function SideIcon({ h, children }: { h: string; children: React.ReactNode }) {
    return (
        <div className={`${h} flex shrink-0 items-center justify-center`}>
            <svg width="16" height="16" viewBox="0 0 16 16" fill="none" stroke="#2060c8">{children}</svg>
        </div>
    );
}

const Frame = () => <rect x=".5" y="1.500" width="15" height="13" fill="#fff" stroke="#3b82e6" />;

function Glyph({ s, c = '#1848c8' }: { s: string; c?: string }) {
    return <><Frame /><text x="8" y="11.500" textAnchor="middle" fill={c} stroke="none" className="text-[9px]">{s}</text></>;
}

function Sidebar() {
    return (
        <aside className="flex w-[24px] shrink-0 flex-col bg-[#f0f0f0] text-[13px] text-[#103c90]">
            <SideIcon h="h-[22px]"><path d="M1.500 8L7 3V6H14.500V10H7V13Z" fill="#fff" /></SideIcon>
            <SideIcon h="h-[23px]"><path d="M8 1L13.500 7H10.500V15H5.500V7H2.500Z" fill="#fff" /></SideIcon>
            <SideIcon h="h-[23px]"><path d="M8 15L13.500 9H10.500V1H5.500V9H2.500Z" fill="#fff" /></SideIcon>
            <SideIcon h="h-[23px]"><Frame /><path d="M2 4.500H7M2 6.500H7M2 8.500H7M2 11.500H5" stroke="#109030" /><path d="M9 4.500H14M9 6.500H14" stroke="#d02020" /><circle cx="11" cy="11" r="3.500" fill="#ddd" stroke="#606060" /><path d="M9 13L13 9" stroke="#606060" /></SideIcon>
            <SideIcon h="h-[23px]"><Frame /><path d="M2 4.500H5M2 6.500H5M2 9.500H5M2 11.500H5" stroke="#d02020" /><path d="M6.500 4.500H9.500M6.500 6.500H9.500M6.500 9.500H9.500M6.500 11.500H9.500" stroke="#109030" /><path d="M11 4.500H14M11 6.500H14M11 9.500H14M11 11.500H14" stroke="#2020d0" /></SideIcon>
            <SideIcon h="h-[23px]"><Frame /><path d="M2 11L5 8L7 9L10 6L12 7L14 4" stroke="#e02020" /></SideIcon>
            <SideIcon h="h-[23px]"><Frame /><path d="M4 5V12M12 3V9" stroke="#e02020" /><path d="M8 4V14" stroke="#109030" /><path d="M3 7h2.500v4H3ZM11 4h2.500v4H11Z" fill="#e02020" stroke="none" /><path d="M7 6h2.500v6H7Z" fill="#109030" stroke="none" /></SideIcon>
            <SideIcon h="h-[23px]"><rect x="3.500" y="1.500" width="12" height="10" fill="#fff" /><rect x=".5" y="4.500" width="12" height="10" fill="#fff" /><path d="M2.500 7.500H6M7 7.500H10.500M2.500 9.500H6M7 9.500H10.500M2.500 11.500H6M7 11.500H10.500" stroke="#505050" /></SideIcon>
            <SideIcon h="h-[24px]"><Glyph s="F10" /></SideIcon>
            <SideIcon h="h-[23px]"><Frame /><path d="M5 5V12H9M5 8.500H9" stroke="#606060" /><path d="M3 3h5v3H3ZM9 7h4v3H9ZM9 11h4v3H9Z" fill="#ffe060" stroke="#e0a000" /></SideIcon>
            <SideIcon h="h-[23px]"><Glyph s="自" c="#f06020" /></SideIcon>
            <SideIcon h="h-[23px]"><Glyph s="F12" /></SideIcon>
            <SideIcon h="h-[23px]"><rect x=".5" y=".5" width="15" height="15" rx="4" fill="#fff" stroke="#208080" /><text x="8" y="11.500" textAnchor="middle" fill="#1848c8" stroke="none" className="text-[9px] italic">f(x)</text></SideIcon>
            <SideIcon h="h-[23px]"><Frame /><circle cx="8" cy="8" r="3.500" /></SideIcon>
            <div className="mx-[3px] my-[3px] h-px shrink-0 bg-[#a0a0a0]" />
            <SideIcon h="h-[23px]"><Frame /><path d="M2 8L4.500 5L6.500 8L9 5L11 8L14 4.500" stroke="#e02020" /><path d="M2 12L4.500 9.500L6.500 12L9 9.500L11 12L14 9.500" stroke="#2020d0" /></SideIcon>
            <div className="flex h-[23px] shrink-0 items-center justify-center text-[10px] font-bold tracking-[-0.5px] text-[#3030c8]">RSI</div>
            <div className="flex h-[23px] shrink-0 items-center justify-center text-[15px] font-bold text-[#c02828]">$</div>
            <SideIcon h="h-[23px]"><path d="M8 0L11 4H5ZM8 16L11 12H5ZM0 8L4 5V11ZM16 8L12 5V11ZM7 4h2v8H7ZM4 7h8v2H4Z" fill="#2060c8" stroke="none" /></SideIcon>
            <SideIcon h="h-[23px]"><path d="M1.500 14.500L3 10.500L10.500 3L13 5.500L5.500 13Z" fill="#f0a030" stroke="#805010" strokeWidth=".8" /><path d="M10.500 3L12 1.500L14.500 4L13 5.500Z" fill="#f08080" stroke="#805010" strokeWidth=".8" /></SideIcon>
            <div className="mx-[3px] mb-[4px] mt-[3px] h-px shrink-0 bg-[#a0a0a0]" />
            <SideIcon h="h-[23px]"><Glyph s="F5" /></SideIcon>
            <SideIcon h="h-[23px]"><Frame /><path d="M4 9A4 3.500 0 0 1 11 5.500M12 7A4 3.500 0 0 1 5 10.500" stroke="#40a830" strokeWidth="2" /><path d="M9 7H13V3.500ZM7 9H3V12.500Z" fill="#40a830" stroke="none" /></SideIcon>
            {['1', '5', '15', '30', '60', '日', '周', '月', 'N', '多', '季', '年'].map((t) => (
                <div key={t} className={`flex h-[23px] shrink-0 items-center justify-center ${t < 'Z' ? 'text-[11px]' : ''} ${t === '日' ? 'border-l border-t border-[#a0a0a0] bg-[#f8f8f8]' : ''}`}>{t}</div>
            ))}
        </aside>
    );
}

function Ticker() {
    return (
        <div className="flex h-[22px] shrink-0 items-center overflow-hidden whitespace-nowrap bg-[#2c2e38] pt-px text-[12px] tracking-[0.2px] text-[#f0f0f0]">
            <span className="flex w-[151px] shrink-0 justify-end overflow-hidden">[发行与上市提示]可转债发行与上市提示</span>
            <span className="w-[256px] shrink-0 pl-[42px]">[发行与上市提示]科创板发行预披露提示</span>
            <span className="w-[268px] shrink-0 pl-[42px]">[今日特别提示]今日上市公司业绩预告提示</span>
            <span className="w-[310px] shrink-0 pl-[42px] tracking-[0.1px]">[今日特别提示]今日A股股份流通提示(2025.10.27)</span>
            <span className="w-[256px] shrink-0 pl-[42px] tracking-[0px]">[其他提示]2025年10月限售股份上市提示</span>
            <span className="w-[353px] shrink-0 pl-[42px]">[其他提示]以现场和网络方式召开股东大会的个股提示(二)</span>
            <span className="shrink-0 pl-[42px]">[其他提示]以现场和网络方式召开股东大会的个股提示(三)</span>
        </div>
    );
}

function StatusBar() {
    const red = 'text-[#e04048]';
    const cells = [
        ['3', red, 'w-[24px]'], ['1.18%', red, 'w-[56px]'], ['10434亿', '', 'w-[59px]'], ['深证', '', 'w-[36px]'],
        ['13489.40', red, 'w-[68px]'], ['200.21', red, 'w-[55px]'], ['1.51%', red, 'w-[56.5px]'], ['12967亿', '', 'w-[59.5px]'],
        ['创业', '', 'w-[36px]'], ['3234.45', red, 'w-[72.5px]'], ['62.88', red, 'w-[50.5px]'], ['1.98%', red, 'w-[56px]'],
        ['6154亿', '', 'w-[63px]'], ['总成交', '', 'w-[50px]'], ['23568亿', '', 'w-[62px]'],
    ];
    return (
        <footer className="relative flex h-[22px] shrink-0 items-center whitespace-nowrap bg-[#161c22] pl-[160px] pt-[2px] text-[14px] text-[#f0f0f0]">
            {cells.map(([t, c, w], i) => <span key={i} className={`${c} ${w} shrink-0`}>{t}</span>)}
            <svg width="13" height="13" viewBox="0 0 13 13" fill="none" stroke="#707888" strokeWidth="1.500"><path d="M4 11.500A5.500 5.500 0 1 1 9 11.500M6 9L9 4" /></svg>
            <span className="ml-[7px] mr-[4px] flex h-[14px] w-[13px] items-center justify-center rounded bg-[#6a7086] text-[11px] font-bold text-[#161c22]">3</span>
            <span className="text-[12px]">已连接</span>
            <div className="ml-auto flex items-center pr-[4px]">
                <svg width="16" height="10" viewBox="0 0 16 10"><rect width="16" height="10" rx="2" fill="#6a7086" /><path d="M3 3.500H13M4 6.800H12" stroke="#161c22" strokeDasharray="2 1" /></svg>
                <svg width="12" height="14" viewBox="0 0 12 14" className="ml-[16px]"><path d="M1 4h3.500v8H1ZM6.500 2H10v8H6.500Z" fill="#6a7086" /><path d="M2.800 2V14M8.300 0V13" stroke="#6a7086" /></svg>
                <svg width="14" height="14" viewBox="0 0 14 14" className="ml-[17px]" fill="none" stroke="#6a7086" strokeWidth="1.500"><circle cx="7" cy="7" r="5.500" strokeDasharray="6 2.600" /><path d="M7 0V5M7 9V14M0 7H5M9 7H14" /></svg>
                <svg width="14" height="14" viewBox="0 0 14 14" className="ml-[15px] mr-[15px]"><path d="M3 5H11V11H3ZM1 11.500H13V14H1Z" fill="#fff" /><path d="M7 0V3M2 1L4 3.500M12 1L10 3.500" stroke="#fff" strokeWidth="1.300" /></svg>
                <span className="text-[12px]">16:02:12</span>
            </div>
            <div className="absolute bottom-0 left-0 flex h-[29px] w-[160px] flex-col bg-[#3e4659]">
                <div className="flex h-[22px] items-center justify-between pl-[5px] pr-[6px] text-[12px]">
                    <span>盘后数据下载中...</span>
                    <svg width="10" height="10" viewBox="0 0 10 10" stroke="#c0c4cc" fill="none"><path d="M.5.5L9.500 9.500M9.500.5L.5 9.500" /></svg>
                </div>
                <div className="h-[7px] border border-t-0 border-[#c0c0c0] bg-black" />
            </div>
        </footer>
    );
}

export default function App() {
    return (
        <div className="flex h-[1050px] w-[1920px] flex-col overflow-hidden bg-black font-[family-name:'Liberation_Sans','Noto_Sans_CJK_SC',sans-serif] leading-none">
            <Header />
            <div className="flex flex-1">
                <div className="flex w-[1896px] shrink-0 flex-col">
                    <div className="flex h-[975px]">
                        <main className="flex w-[1614px] shrink-0 flex-col">
                            <Toolbar />
                            <IndicatorRow />
                            <div className="relative h-[395px] border-b border-[#b00000]">
                                <Notes />
                                <div className="relative"><PriceChart /></div>
                            </div>
                            <div className="flex h-[14px] items-center pl-px pt-[2px] text-[13px] text-[#c0c0c0]">
                                <ChevronDot /><span className="ml-[4px]">十全十美指标</span>
                            </div>
                            <div className="h-[476px] border-b border-[#b00000]"><BlockChart /></div>
                            <BottomBars />
                        </main>
                        <QuotePanel />
                    </div>
                    <Ticker />
                    <StatusBar />
                </div>
                <Sidebar />
            </div>
        </div>
    );
}
